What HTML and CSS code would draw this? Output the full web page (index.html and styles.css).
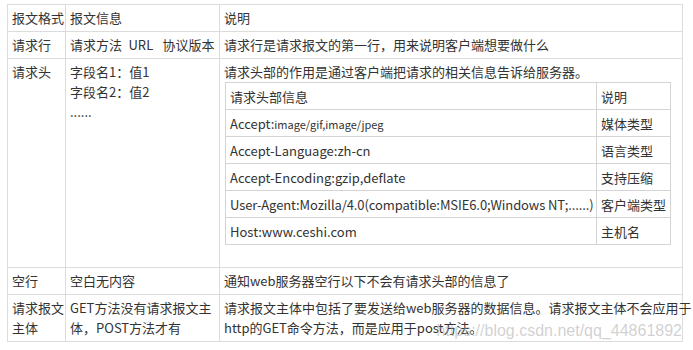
FILE: index.html
```html
<!DOCTYPE html>
<html lang="zh-CN">
<head>
<meta charset="utf-8">
<title>HTTP 请求报文格式</title>
<link rel="stylesheet" href="styles.css">
</head>
<body>
<div class="page">
  <table class="msg">
    <colgroup>
      <col class="c-format">
      <col class="c-info">
      <col class="c-desc">
    </colgroup>
    <tr>
      <td>报文格式</td>
      <td>报文信息</td>
      <td>说明</td>
    </tr>
    <tr>
      <td>请求行</td>
      <td class="one-line">请求方法&ensp;URL&ensp;&nbsp;协议版本</td>
      <td>请求行是请求报文的第一行，用来说明客户端想要做什么</td>
    </tr>
    <tr>
      <td>请求头</td>
      <td>
        <div>字段名1：值1</div>
        <div>字段名2：值2</div>
        <div>......</div>
      </td>
      <td>
        <div>请求头部的作用是通过客户端把请求的相关信息告诉给服务器。</div>
        <table class="fields">
          <colgroup>
            <col class="f-name">
            <col class="f-note">
          </colgroup>
          <tr><td>请求头部信息</td><td>说明</td></tr>
          <tr><td>Accept:<span class="small">image/gif,image/jpeg</span></td><td>媒体类型</td></tr>
          <tr><td>Accept-Language:zh-cn</td><td>语言类型</td></tr>
          <tr><td>Accept-Encoding:gzip,deflate</td><td>支持压缩</td></tr>
          <tr><td class="tight">User-Agent:Mozilla/4.0(compatible:MSIE6.0;Windows NT;......)</td><td>客户端类型</td></tr>
          <tr><td>Host:www.ceshi.com</td><td>主机名</td></tr>
        </table>
      </td>
    </tr>
    <tr>
      <td>空行</td>
      <td>空白无内容</td>
      <td>通知web服务器空行以下不会有请求头部的信息了</td>
    </tr>
    <tr>
      <td>请求报文主体</td>
      <td>GET方法没有请求报文主体，POST方法才有</td>
      <td class="one-line">请求报文主体中包括了要发送给web服务器的数据信息。请求报文主体不会应用于<br>http的GET命令方法，而是应用于post方法。</td>
    </tr>
  </table>
  <span class="mark">https://blog.csdn.net/qq_44861892</span>
</div>
</body>
</html>
```

FILE: styles.css
```css
body {
  margin: 0;
  background: #fff;
  font-family: "Noto Sans CJK SC", "Noto Sans", sans-serif;
  font-size: 13px;
  color: #333;
}

.page {
  position: relative;
  padding: 4px 0 0 7px;
  height: 346px;
  box-sizing: border-box;
}

.msg {
  border-collapse: collapse;
  table-layout: fixed;
  width: 675px;
}

.c-format { width: 58px; }
.c-info { width: 154px; }
.c-desc { width: 463px; }

.msg td {
  border: 1px solid #dcdcdc;
  padding: 3px 1px 3px 4px;
  line-height: 20px;
  vertical-align: top;
}

.msg td.one-line {
  white-space: nowrap;
}

.fields {
  border-collapse: collapse;
  table-layout: fixed;
  width: 445px;
  margin: 0 0 19px 1px;
}

.f-name { width: 371px; }
.f-note { width: 74px; }

.msg .fields td {
  border: 1px solid #d4d4d4;
  padding: 4px 2px 2px 4px;
  white-space: nowrap;
}

.msg .fields td.tight {
  letter-spacing: -0.1px;
}

.small {
  font-size: 11px;
}

/* blog watermark stamped over the bottom-right corner */
.mark {
  position: absolute;
  right: 11px;
  top: 322px;
  font-family: "Liberation Sans", Arial, sans-serif;
  font-size: 16px;
  line-height: 18px;
  color: rgba(170, 170, 170, 0.55);
  pointer-events: none;
}
```
